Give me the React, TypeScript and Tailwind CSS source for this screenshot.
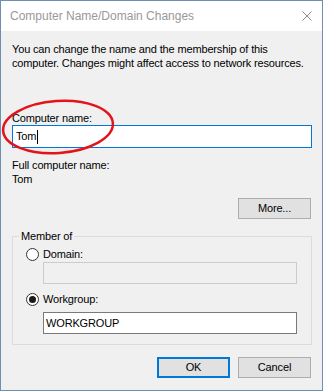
import React from "react";

const Radio = ({ checked }: { checked?: boolean }) => (
  <span className="w-[13px] h-[13px] rounded-full border border-[#333333] bg-white flex items-center justify-center shrink-0">
    {checked && <span className="w-[7px] h-[7px] rounded-full bg-[#1a1a1a]" />}
  </span>
);

const Button = ({ label, primary }: { label: string; primary?: boolean }) => (
  <button
    className={
      primary
        ? "w-[73px] h-[21px] bg-[#e1e1e1] border-2 border-[#0078d7] text-black leading-none"
        : "w-[73px] h-[21px] bg-[#e1e1e1] border border-[#adadad] text-black leading-none"
    }
  >
    {label}
  </button>
);

export default function App() {
  return (
    <div className="relative w-[323px] h-[391px] border border-[#6e8fb0] bg-[#f0f0f0] flex flex-col font-['Liberation_Sans',Arial,sans-serif] text-[11px] tracking-[-0.15px] text-black">
      {/* title bar */}
      <div className="h-[30px] bg-white flex items-center justify-between pl-[9px] pr-[10px] shrink-0">
        <span className="text-[12px] tracking-normal text-[#999999]">Computer Name/Domain Changes</span>
        <svg width="10" height="10" viewBox="0 0 10 10" className="shrink-0">
          <path d="M0.5 0.5 L9.5 9.5 M9.5 0.5 L0.5 9.5" stroke="#8a8a8a" strokeWidth="1" fill="none" />
        </svg>
      </div>

      {/* body */}
      <div className="flex flex-col pl-[11px] pr-[10px]">
        <p className="mt-[11px] leading-[14px] whitespace-nowrap">
          You can change the name and the membership of this
          <br />
          computer. Changes might affect access to network resources.
        </p>

        <div className="mt-[41px] leading-[14px]">Computer name:</div>
        <div className="w-[300px] h-[23px] bg-white border border-[#0078d7] flex items-center pl-[3px]">
          <span>Tom</span>
          <span className="w-px h-[14px] bg-black ml-[1px]" />
        </div>

        <div className="mt-[10px] leading-[14px]">Full computer name:</div>
        <div className="leading-[14px]">Tom</div>

        <div className="mt-[12px] flex justify-end pr-[1px]">
          <Button label="More..." />
        </div>

        <fieldset className="mt-[10px] w-[300px] border border-[#dcdcdc] pb-[10px]">
          <legend className="ml-[6px] px-[2px] leading-[14px]">Member of</legend>
          <div className="flex flex-col pl-[13px]">
            <div className="mt-[4px] flex items-center gap-[4px] leading-[14px]">
              <Radio />
              <span>Domain:</span>
            </div>
            <div className="mt-[1px] ml-[17px] w-[254px] h-[22px] border border-[#cccccc] bg-[#f0f0f0]" />
            <div className="mt-[8px] flex items-center gap-[4px] leading-[14px]">
              <Radio checked />
              <span>Workgroup:</span>
            </div>
            <div className="mt-[6px] ml-[17px] w-[254px] h-[22px] border border-[#7a7a7a] bg-white flex items-center pl-[2px]">
              WORKGROUP
            </div>
          </div>
        </fieldset>

        <div className="mt-[12px] flex justify-end gap-[8px] pr-[1px]">
          <Button label="OK" primary />
          <Button label="Cancel" />
        </div>
      </div>

      {/* red annotation */}
      <svg className="absolute left-0 top-[94px] pointer-events-none" width="124" height="64" viewBox="0 0 124 64">
        <ellipse cx="57" cy="32" rx="55" ry="26" transform="rotate(-4 57 32)" fill="none" stroke="#e3131c" strokeWidth="2.5" />
      </svg>
    </div>
  );
}
